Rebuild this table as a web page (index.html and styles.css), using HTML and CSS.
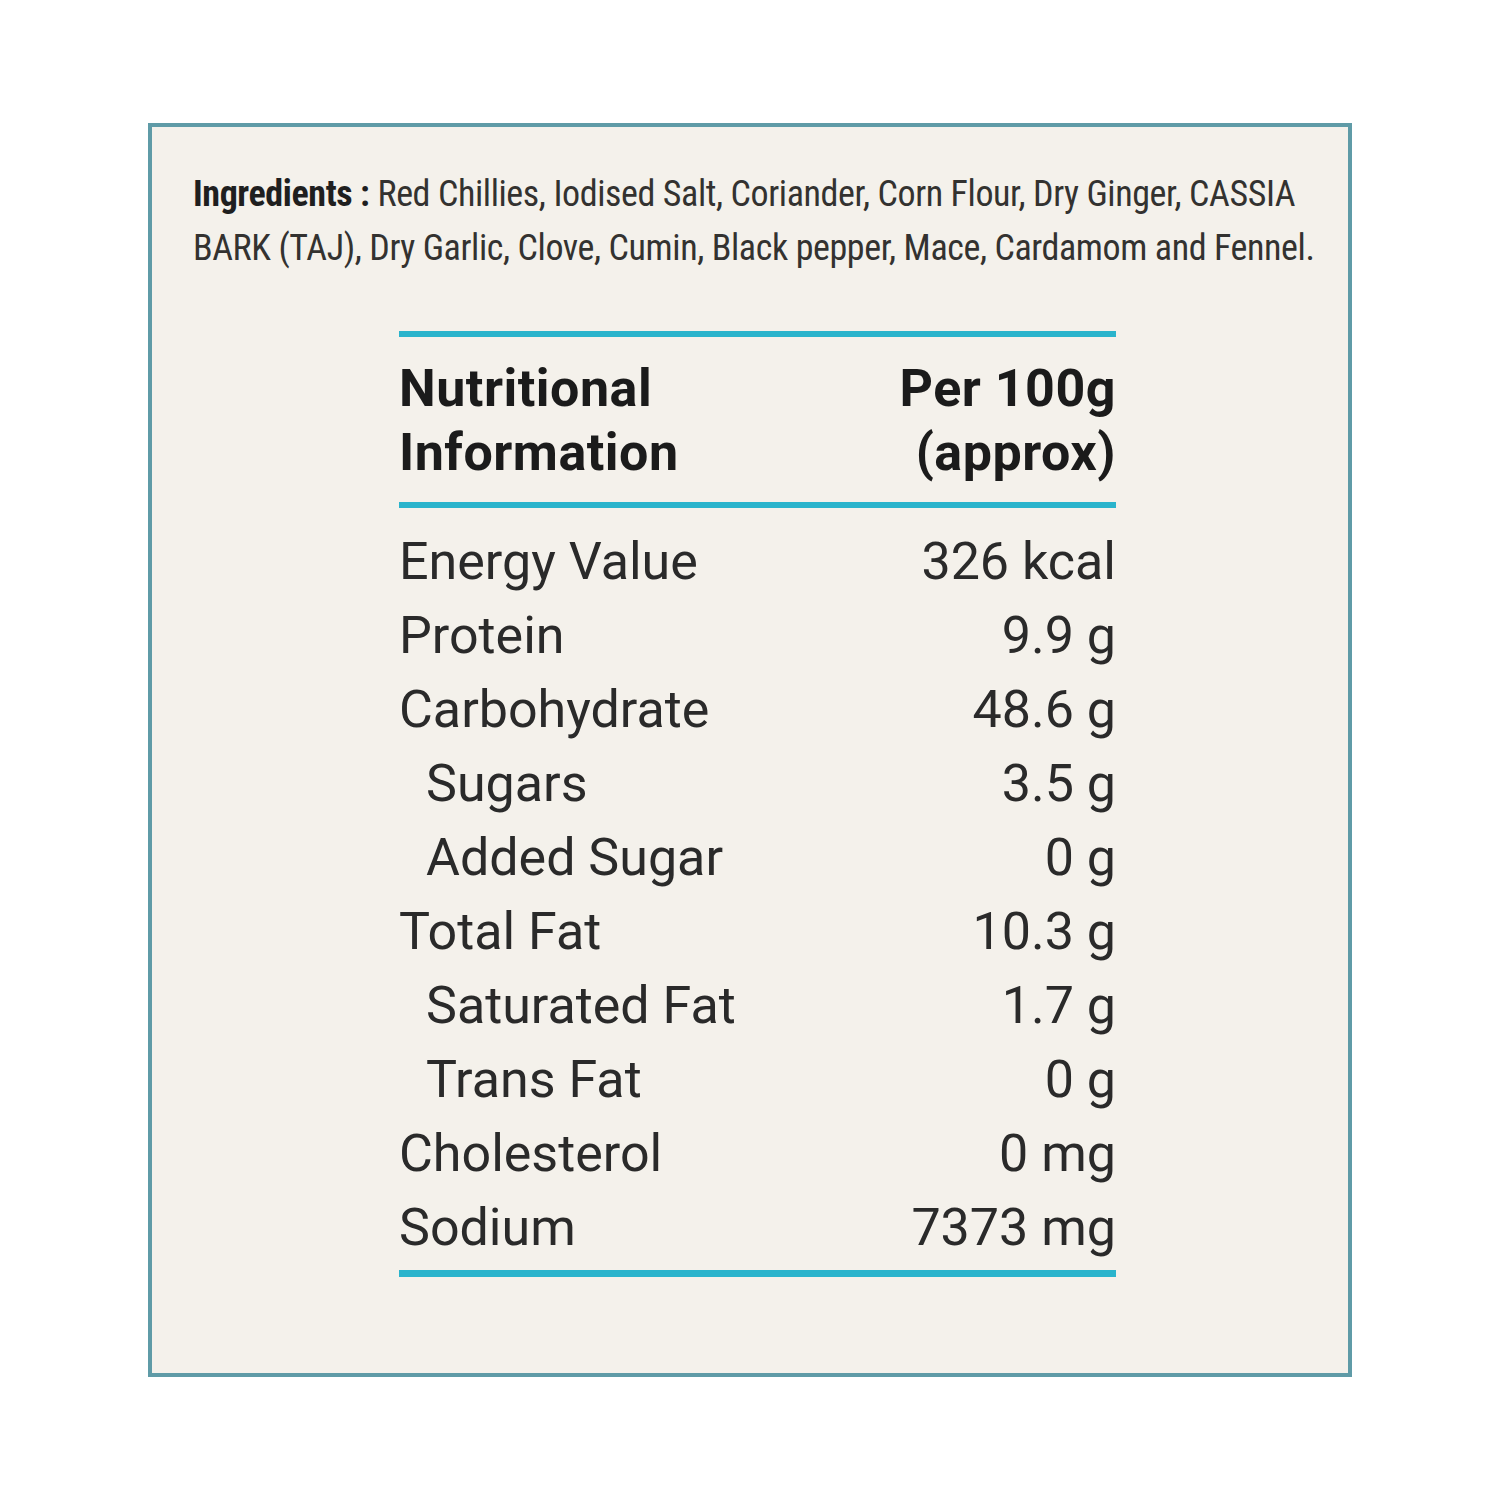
FILE: index.html
```html
<!DOCTYPE html>
<html>
<head>
<meta charset="utf-8">
<link rel="stylesheet" href="styles.css">
</head>
<body>
<div class="card">
  <p class="ingredients"><b>Ingredients :</b> Red Chillies, Iodised Salt, Coriander, Corn Flour, Dry Ginger, CASSIA BARK (TAJ), Dry Garlic, Clove, Cumin, Black pepper, Mace, Cardamom and Fennel.</p>
  <div class="table">
    <div class="head">
      <div>Nutritional<br>Information</div>
      <div class="r">Per 100g<br>(approx)</div>
    </div>
    <div class="rows">
      <div class="row"><span>Energy Value</span><span>326 kcal</span></div>
      <div class="row"><span>Protein</span><span>9.9 g</span></div>
      <div class="row"><span>Carbohydrate</span><span>48.6 g</span></div>
      <div class="row sub"><span>Sugars</span><span>3.5 g</span></div>
      <div class="row sub"><span>Added Sugar</span><span>0 g</span></div>
      <div class="row"><span>Total Fat</span><span>10.3 g</span></div>
      <div class="row sub"><span>Saturated Fat</span><span>1.7 g</span></div>
      <div class="row sub"><span>Trans Fat</span><span>0 g</span></div>
      <div class="row"><span>Cholesterol</span><span>0 mg</span></div>
      <div class="row"><span>Sodium</span><span>7373 mg</span></div>
    </div>
  </div>
</div>
</body>
</html>
```

FILE: styles.css
```css
html, body {
  margin: 0;
  background: #ffffff;
}
.card {
  box-sizing: border-box;
  margin: 123px 0 0 148px;
  width: 1204px;
  height: 1254px;
  border: 4px solid #5f9ba7;
  background: #f4f1eb;
  padding: 40px 0 0 41px;
}
.ingredients {
  margin: 0;
  width: 1132px;
  font-family: "Roboto Condensed", "Liberation Sans Narrow", "DejaVu Sans Condensed", sans-serif;
  font-size: 36px;
  letter-spacing: -0.4px;
  line-height: 54px;
  color: #333230;
}
.ingredients b {
  color: #1f1f1f;
}
.table {
  width: 717px;
  margin: 56px 0 0 206px;
  font-family: Roboto, sans-serif;
  color: #2a2a2a;
}
.head {
  display: flex;
  justify-content: space-between;
  border-top: 6px solid #2ab4cc;
  border-bottom: 6px solid #2ab4cc;
  padding: 20px 0 17px;
  font-weight: 700;
  font-size: 52px;
  letter-spacing: 0.5px;
  line-height: 64px;
  color: #1b1b1b;
}
.head .r {
  text-align: right;
}
.rows {
  padding: 17px 0 5px;
  border-bottom: 7px solid #2ab4cc;
}
.row {
  display: flex;
  justify-content: space-between;
  font-size: 52px;
  line-height: 74px;
}
.row.sub {
  padding-left: 27px;
}
```
